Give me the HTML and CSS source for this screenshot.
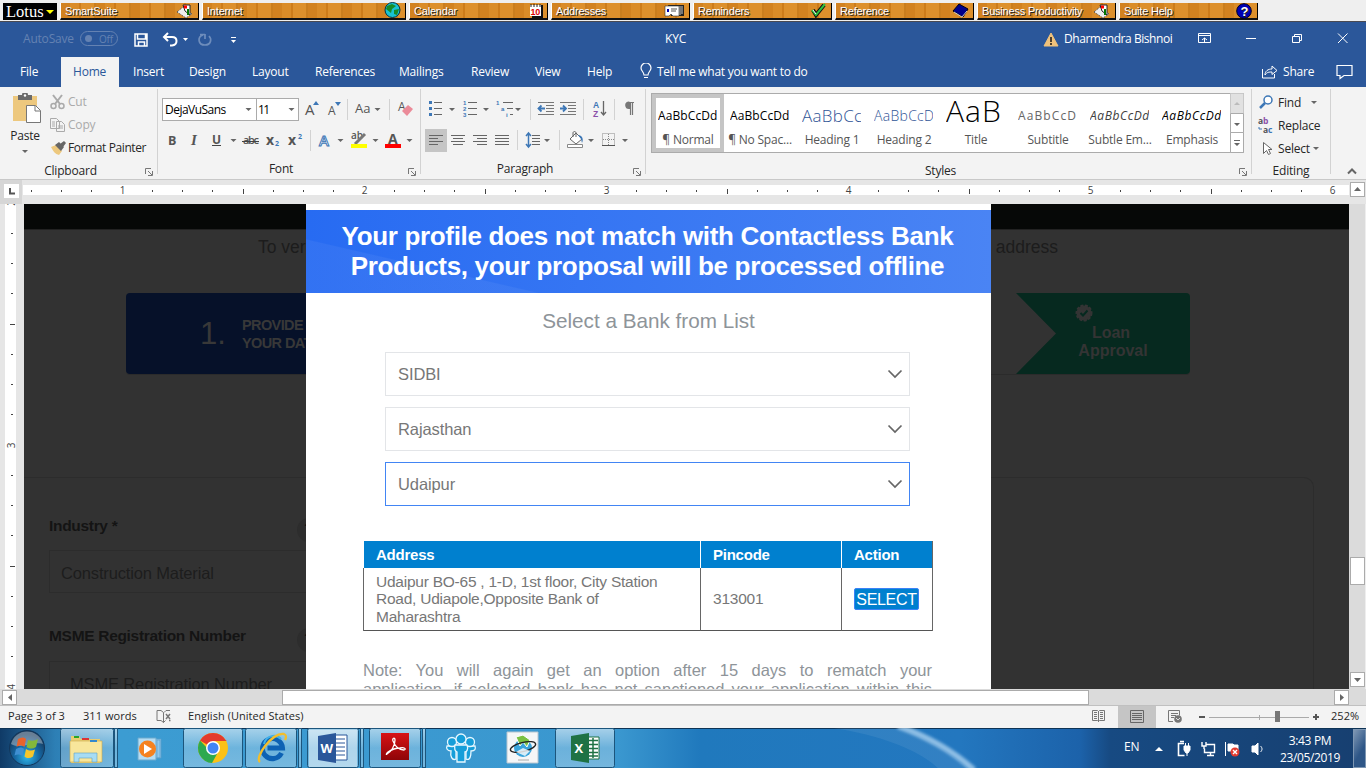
FILE: index.html
```html
<!DOCTYPE html>
<html lang="en">
<head>
<meta charset="utf-8">
<title>KYC</title>
<link rel="stylesheet" href="styles.css">
</head>
<body>
<div class="screen">
<nav class="lotus">
  <div class="lotus-logo">Lotus<i></i></div>
  <div class="wood">SmartSuite<svg width="18" height="16"><path d="M1 9l6-5 9 7-6 4z" fill="#eee" stroke="#444" stroke-dasharray="1 1"/><path d="M7 2h7v10l-5-4z" fill="#fff" stroke="#222"/><path d="M8 4h3" stroke="red" stroke-width="3"/><path d="M12 6v6" stroke="#070" stroke-width="2"/></svg></div>
  <div class="wood wide">Internet<svg width="17" height="17"><circle cx="8.500" cy="8" r="7.500" fill="#19c3d2" stroke="#034" /><path d="M3 4l5-2 4 2-4 3-1 4-5-4zM10 8l5-1-2 6-3-1z" fill="#178c27"/></svg></div>
  <div class="wood">Calendar<svg width="14" height="15"><path d="M3 2h11v13H3z" fill="#111"/><path d="M1 2h11v11H1z" fill="#fff"/><path d="M2 1v3M5 1v3M8 1v3M11 1v3" stroke="#222"/><text x="1.500" y="12" class="cal">10</text></svg></div>
  <div class="wood">Addresses<svg width="21" height="14"><path d="M4 1h16v11H7z" fill="#222"/><path d="M1 2h14v10H9l-2-2-2 2H1z" fill="#fff" stroke="#333" stroke-width=".6"/><path d="M3 5h2v3H3z" fill="#00a"/><path d="M7 5h6M7 7h5" stroke="#555"/><path d="M16 2v9M18 2v8" stroke="#ccc"/></svg></div>
  <div class="wood">Reminders<svg width="16" height="15"><path d="M2 7l3 5L13 2" fill="none" stroke="#111" stroke-width="4"/><path d="M1 7l4 5L14 1" fill="none" stroke="#30c040" stroke-width="2"/><path d="M2 7l3 4" stroke="#fff"/></svg></div>
  <div class="wood">Reference<svg width="17" height="15"><path d="M1 8l6-7 9 5-5 8z" fill="#00008b" stroke="#001"/><path d="M2 9l8 5 5-6" fill="none" stroke="#ccc"/></svg></div>
  <div class="wood">Business Productivity<svg width="18" height="16"><path d="M1 9l6-5 9 7-6 4z" fill="#eee" stroke="#444" stroke-dasharray="1 1"/><path d="M7 2h7v10l-5-4z" fill="#fff" stroke="#222"/><path d="M8 4h3" stroke="red" stroke-width="3"/><path d="M12 6v6" stroke="#070" stroke-width="2"/></svg></div>
  <div class="wood">Suite Help<svg width="17" height="16"><circle cx="8" cy="8" r="7.300" fill="#0000b4" stroke="#002"/><text x="4.500" y="12.500" class="q">?</text></svg></div>
</nav>

<header class="title">
  <span class="autosave">AutoSave</span>
  <span class="toggle"><i></i>Off</span>
  <svg class="quick" width="110" height="35" viewBox="130 22 110 35" fill="none" stroke="#fff">
    <path d="M135 34h12v12h-12zM137.500 34v5h8v-5M138.500 46v-4h6v4" stroke-width="1.500"/>
    <path d="M168 33l-4 4 4 4M164 37h8c6 0 6 8 0 8.500h-2" stroke-width="2"/>
    <path d="M183 38h5l-2.500 3z" fill="#fff" stroke="none"/>
    <path d="M203 35c-6 2-5 10 2 10 6 0 7-6 4-9M205 39v-5M200 34.500h5" stroke="#6e8dbc" stroke-width="1.700"/>
    <path d="M231 37.500h5"/><path d="M231 40h5l-2.500 3z" fill="#fff" stroke="none"/>
  </svg>
  <span class="doc">KYC</span>
  <svg class="warn" width="16" height="15"><path d="M8 1l7 13H1z" fill="#f0c27b" stroke="#f0c27b"/><path d="M8 5v5M8 11v2" stroke="#4d4030" stroke-width="2"/></svg>
  <span class="user">Dharmendra Bishnoi</span>
  <svg class="winctl" width="166" height="35" viewBox="1190 22 166 35" fill="none" stroke="#fff">
    <path d="M1198.500 33.500h12v9h-12zM1198.500 35.500h12M1204.500 42v-4M1202 40l2.500-2 2.500 2"/>
    <path d="M1246 38.500h10M1292.500 36.500h7v6h-7zM1294.500 36.500v-2h7v6h-2M1338 33.500l9.500 9.500M1347.500 33.500l-9.500 9.500"/>
  </svg>
</header>
<nav class="tabs">
  <span class="file">File</span><span class="on">Home</span><span>Insert</span><span>Design</span><span>Layout</span><span>References</span><span>Mailings</span><span>Review</span><span>View</span><span>Help</span>
  <svg width="13" height="18" fill="none" stroke="#fff" stroke-width="1.200"><path d="M4 12c0-3-3-4-3-7a4.800 4.800 0 0 1 10 0c0 3-3 4-3 7zM4 14.500h4"/></svg>
  <span class="tell">Tell me what you want to do</span>
  <svg width="17" height="16" fill="none" stroke="#fff"><path d="M1.500 5v9h12v-4M4 11c0-4 3-6 7-6V2l5 4.500-5 4V8C8 8 6 8 4 11z"/></svg>
  <span>Share</span>
  <svg width="17" height="16" fill="none" stroke="#fff" stroke-width="1.200"><path d="M1 1.500h15v10H8l-4 3v-3H1z"/></svg>
</nav>

<section class="ribbon">
  <div class="group clipboard">
    <div class="body">
      <div class="paste">
        <svg width="30" height="31"><path d="M1 3h24v25H1z" fill="#edc87e"/><path d="M6 2h4a3 3 0 0 1 6 0h4v5H6z" fill="#6a6a6a"/><circle cx="13" cy="2.500" r="1.200" fill="#fff"/><path d="M14.500 12.500h9l5 5v12h-14z" fill="#fff" stroke="#777"/><path d="M23 13v5h5" fill="none" stroke="#777"/></svg>
        <span>Paste</span><i class="caret"></i>
      </div>
      <div class="clips">
        <div class="dim"><svg width="16" height="16" fill="none" stroke="#aaa" stroke-width="1.500"><circle cx="3.500" cy="12" r="2.500"/><circle cx="11.500" cy="12" r="2.500"/><path d="M3 1l7 9M12 1L5 10" stroke-width="2"/></svg>Cut</div>
        <div class="dim"><svg width="16" height="16" fill="#f3f3f3" stroke="#aaa"><path d="M.5 1.500h6l3 3v7h-9zM6.500 4.500h5l3 3v7h-8z"/><path d="M2 5h3M2 7h3M2 9h3M8 9h5M8 11h5" /></svg>Copy</div>
        <div class="fp"><svg width="16" height="16"><path d="M1 7l5-2 6 6-3 4c-4-1-6-4-8-8z" fill="#edc87e"/><path d="M5 5l4-3 5 5-3 4zM10 4l4-3 2 2-3 4z" fill="#666"/></svg>Format Painter</div>
      </div>
    </div>
    <div class="label">Clipboard</div>
    <svg class="launch" width="8" height="8"><path d="M.5 6V.5H6M3 3l4 4M7.500 3v4.500H3" fill="none" stroke="#777"/></svg>
  </div>

  <div class="group font">
    <svg class="art" width="263" height="75" viewBox="158 87 263 75">
      <rect x="162.500" y="98.500" width="94" height="22" fill="#fff" stroke="#ababab"/><rect x="256.500" y="98.500" width="42" height="22" fill="#fff" stroke="#ababab"/>
      <g class="t"><text x="165" y="114" textLength="61">DejaVuSans</text><text x="258" y="114" textLength="12">11</text></g>
      <g fill="#666"><path id="c" d="M245.500 108h6l-3 3z"/><use href="#c" x="43"/><use href="#c" x="129"/><use href="#c" x="-15" y="31"/><use href="#c" x="92" y="31"/><use href="#c" x="127" y="31"/><use href="#c" x="161" y="31"/></g>
      <g class="gt"><text x="305" y="115" font-size="15">A</text><text x="328" y="115" font-size="12">A</text><text x="355" y="113" font-size="13">Aa</text><text x="398" y="111" font-size="12">A</text></g>
      <path d="M313 105l3-4 3 4zM335 102h6l-3 4z" fill="#3d77b6"/>
      <path d="M402 111l6-6 5 4-6 7z" fill="#eb8b99"/>
      <g stroke="#d2d2d2"><path d="M347.500 99v21M389.500 99v21M310.500 130v21"/></g>
      <g class="gt"><text x="168" y="144.500" font-weight="bold" font-size="12.500">B</text><text x="191" y="144.500" font-style="italic" font-weight="bold" font-family="Liberation Serif" font-size="15">I</text><text x="212" y="144" font-weight="bold" font-size="12">U</text><text x="243" y="144" font-size="11" font-weight="600" textLength="16">abc</text><text x="266" y="144.500" font-weight="bold" font-size="14">x</text><text x="288" y="144.500" font-weight="bold" font-size="14">x</text></g>
      <path d="M212 145.500h9M242 141.500h17" stroke="#444"/>
      <g class="tiny"><text x="275" y="146">2</text><text x="298" y="139">2</text></g>
      <text x="319" y="145.500" class="glow">A</text>
      <g class="gt"><text x="351" y="139" font-size="10" font-weight="600">ab</text><text x="388" y="144" font-size="14" font-weight="bold">A</text></g>
      <path d="M365 134l-8 8-2 2" stroke="#777" stroke-width="3"/><path d="M351 144h16v4h-16z" fill="#ff0"/><path d="M385 144h16v4h-16z" fill="red"/>
    </svg>
    <div class="label">Font</div>
    <svg class="launch" width="8" height="8"><path d="M.5 6V.5H6M3 3l4 4M7.500 3v4.500H3" fill="none" stroke="#777"/></svg>
  </div>

  <div class="group para">
    <svg class="art" width="225" height="75" viewBox="421 87 225 75">
      <path d="M425 129h22v23h-22z" fill="#c5c5c5"/>
      <g fill="#3d77b6"><path d="M429 101h3v3h-3zM429 107h3v3h-3zM429 113h3v3h-3z"/></g>
      <path d="M434 102.500h8M434 108.500h8M434 114.500h8M468 102.500h9M468 108.500h9M468 114.500h9M503 102.500h10M507 108.500h6M510 114.500h3" stroke="#666"/>
      <g class="tiny sm"><text x="463" y="105">1</text><text x="463" y="111">2</text><text x="463" y="117">3</text><text x="496" y="105">1</text><text x="501" y="111">a</text><text x="506" y="117">i</text></g>
      <g fill="#666"><path d="M449 108h6l-3 3zM483 108h6l-3 3zM515 108h6l-3 3zM544 139h6l-3 3zM588 139h6l-3 3zM622 139h6l-3 3z"/></g>
      <path d="M530.500 99v21M583.500 99v21M614.500 99v21M517.500 130v20M559.500 130v20" stroke="#d2d2d2"/>
      <path d="M538 102.500h16M546 105.500h8M546 108.500h8M546 111.500h8M538 114.500h16M560 102.500h16M568 105.500h8M568 108.500h8M568 111.500h8M560 114.500h16" stroke="#777"/>
      <path d="M545 108.500h-6M541.500 105.500l-3 3 3 3M560 108.500h6M563 105.500l3 3-3 3" stroke="#3d77b6" stroke-width="1.800" fill="none"/>
      <text x="593" y="108" class="az">A</text><text x="593" y="117" class="az zz">Z</text><path d="M603.500 101v14M601 112l2.500 3 2.500-3" stroke="#666" fill="none" stroke-width="1.300"/>
      <path d="M634 102.500h-5a2.500 2.500 0 0 0 0 6h1M630.500 103v12M632.500 103v12" stroke="#777" fill="none" stroke-width="1.200"/><path d="M625.500 105.500a3 3 0 0 1 5-3v6c-3 0-5-1-5-3z" fill="#777"/>
      <path d="M429 135.500h14M429 138.500h9M429 141.500h14M429 144.500h9M451 135.500h14M453 138.500h10M451 141.500h14M453 144.500h10M473 135.500h14M477 138.500h10M473 141.500h14M477 144.500h10M495 135.500h14M495 138.500h14M495 141.500h14M495 144.500h14M532 135.500h8M532 138.500h8M532 141.500h8M532 144.500h8" stroke="#666"/>
      <path d="M528.500 133v14M526 136l2.500-3 2.500 3M526 144l2.500 3 2.500-3" stroke="#3d77b6" fill="none" stroke-width="1.500"/>
      <path d="M570 139l6-6 6 6-6 5z" fill="#fff" stroke="#666"/><path d="M573 137v-4c0-2 3-2 3 0v4" fill="none" stroke="#666"/><path d="M578 135c4 0 6 4 4 8l-1-4z" fill="#3d77b6"/><path d="M567.500 144.500h15v3h-15z" fill="#fff" stroke="#888"/>
      <path d="M602.500 133.500h12v12h-12zM608.500 134v12M603 139.500h12" fill="none" stroke="#888" stroke-dasharray="1 1"/><path d="M602 145.500h13" stroke="#555"/>
    </svg>
    <div class="label">Paragraph</div>
    <svg class="launch" width="8" height="8"><path d="M.5 6V.5H6M3 3l4 4M7.500 3v4.500H3" fill="none" stroke="#777"/></svg>
  </div>

  <div class="group styles">
    <div class="gallery">
      <div class="st sel"><b>AaBbCcDd</b><span>¶ Normal</span></div>
      <div class="st"><b>AaBbCcDd</b><span>¶ No Spac...</span></div>
      <div class="st h1"><b>AaBbCc</b><span>Heading 1</span></div>
      <div class="st h2"><b>AaBbCcD</b><span>Heading 2</span></div>
      <div class="st tt"><b>AaB</b><span>Title</span></div>
      <div class="st sub"><b>AaBbCcD</b><span>Subtitle</span></div>
      <div class="st sem"><b>AaBbCcDd</b><span>Subtle Em...</span></div>
      <div class="st em"><b>AaBbCcDd</b><span>Emphasis</span></div>
      <svg class="gal" width="14" height="60"><path d="M.5.500h13v20H.5z" fill="#e1e1e1" stroke="#c8c8c8"/><path d="M.5 20.500h13v19H.5zM.5 39.500h13v20H.5z" fill="#fff" stroke="#ababab"/><path d="M4 12h6l-3-3z" fill="#bbb"/><path d="M4 30h6l-3 3zM4 50h6l-3 3zM4 47h6v1H4z" fill="#666"/></svg>
    </div>
    <div class="label">Styles</div>
    <svg class="launch" width="8" height="8"><path d="M.5 6V.5H6M3 3l4 4M7.500 3v4.500H3" fill="none" stroke="#777"/></svg>
  </div>

  <div class="group editing">
    <div class="finds">
      <div><svg width="19" height="16"><circle cx="10" cy="5" r="4" fill="#fff" stroke="#3d77b6" stroke-width="1.500"/><path d="M7 8l-5 5" stroke="#3d77b6" stroke-width="2.500"/></svg>Find<i class="caret far"></i></div>
      <div><svg width="19" height="16" class="rep"><text x="0" y="6">a<tspan fill="#8a4fa8">b</tspan></text><text x="5" y="15">a<tspan fill="#3d77b6">c</tspan></text><path d="M1 9v2h3" fill="none" stroke="#3d77b6"/></svg>Replace</div>
      <div><svg width="19" height="16"><path d="M5.500 1.500v11l3-3 2 4 2-1-2-4h3.500z" fill="#fff" stroke="#666"/></svg>Select<i class="caret"></i></div>
    </div>
    <div class="label">Editing</div>
  </div>
  <svg class="collapse" width="10" height="7"><path d="M1 5.500l4-4 4 4" fill="none" stroke="#666" stroke-width="2"/></svg>
</section>

<div class="hruler">
  <svg width="1349" height="24" viewBox="0 180 1349 24">
    <defs><pattern id="h" x="1" y="180" width="242" height="24" patternUnits="userSpaceOnUse"><path d="M30 10h1v2h-1zM60 10h1v2h-1zM90 10h1v2h-1zM151 10h1v2h-1zM181 10h1v2h-1zM211 10h1v2h-1zM0 9h1v5H0z" fill="#444"/></pattern></defs>
    <path d="M0 180h22v24H0z" fill="#d6d6d6"/><path d="M4 184h15v14H4z" fill="#fff"/><path d="M10 188v5.500h5" fill="none" stroke="#555" stroke-width="2"/>
    <path d="M23 185h1326v10H23z" fill="#fff"/><path d="M24 185h1308v10H24z" fill="url(#h)"/>
    <g class="num"><text x="122.500" y="194">1</text><text x="364.500" y="194">2</text><text x="606.500" y="194">3</text><text x="848.500" y="194">4</text><text x="1090.500" y="194">5</text><text x="1332.500" y="194">6</text></g>
  </svg>
  <div class="sbtn"><svg width="13" height="13"><path d="M3 8h7L6.500 4z" fill="#666"/></svg></div>
</div>

<main class="work">
  <svg class="vruler" width="24" height="485" viewBox="0 204 24 485">
    <defs><pattern id="v" x="0" y="203" width="24" height="242" patternUnits="userSpaceOnUse"><path d="M11 30h2v1h-2zM11 60h2v1h-2zM11 90h2v1h-2zM10 121h5v1h-5zM11 151h2v1h-2zM11 181h2v1h-2zM11 211h2v1h-2z" fill="#444"/></pattern></defs>
    <path d="M5 204h11v485H5z" fill="#fff"/><path d="M5 204h11v485H5z" fill="url(#v)"/>
    <g class="num"><text transform="translate(15 203) rotate(-90)">2</text><text transform="translate(15 445.500) rotate(-90)">3</text><text transform="translate(15 687) rotate(-90)">4</text></g>
  </svg>
  <div class="page">
    <div class="band"></div>
    <div class="verify"><span>To verify</span><span>address</span></div>
    <div class="steps">
      <div class="one"><span class="n">1.</span><span>PROVIDE<br>YOUR DATA</span></div>
      <div class="loan">
        <svg width="18" height="18"><circle cx="9" cy="9" r="7.500" fill="#343434" stroke="#343434" stroke-width="2" stroke-dasharray="3 1.500"/><path d="M5.500 9l2.500 2.500 4.500-5" fill="none" stroke="#06291f" stroke-width="2"/></svg>
        <span class="word">Loan</span><span>Approval</span>
      </div>
    </div>
    <div class="form">
      <div class="lab">Industry *<i>?</i></div>
      <div class="field">Construction Material</div>
      <div class="lab">MSME Registration Number<i>?</i></div>
      <div class="field in">MSME Registration Number</div>
    </div>
    <section class="modal">
      <h1><span>Your profile does not match with Contactless Bank</span><span>Products, your proposal will be processed offline</span></h1>
      <h2>Select a Bank from List</h2>
      <div class="sel-box">SIDBI<svg width="16" height="10"><path d="M1.500 1.500L8 8l6.500-6.500"/></svg></div>
      <div class="sel-box">Rajasthan<svg width="16" height="10"><path d="M1.500 1.500L8 8l6.500-6.500"/></svg></div>
      <div class="sel-box active">Udaipur<svg width="16" height="10"><path d="M1.500 1.500L8 8l6.500-6.500"/></svg></div>
      <div class="table">
        <b>Address</b><b>Pincode</b><b>Action</b>
        <div>Udaipur BO-65 , 1-D, 1st floor, City Station<br>Road, Udiapole,Opposite Bank of<br>Maharashtra</div><div>313001</div><div><span class="pick">SELECT</span></div>
      </div>
      <p><span>Note: You will again get an option after 15 days to rematch your</span><span>application, if selected bank has not sanctioned your application within this</span></p>
    </section>
  </div>
  <div class="vscroll"><i></i><div class="sbtn"><svg width="13" height="13"><path d="M3 5h7L6.500 9z" fill="#666"/></svg></div></div>
</main>

<div class="hscroll"><div class="sbtn"><svg width="13" height="13"><path d="M9 3v7L5 6.500z" fill="#666"/></svg></div><i></i><div class="sbtn"><svg width="13" height="13"><path d="M5 3v7l4-3.500z" fill="#666"/></svg></div></div>

<footer class="status">
  <span>Page 3 of 3</span><span>311 words</span>
  <svg width="16" height="14" fill="none" stroke="#777"><path d="M7.500 2.500L5 .500H1v10h4l2.500 2 2-2M7.500 2.500v10M8 2.500l2-2h4"/><path d="M10 4l4 5M14 4l-4 5M13 10.500h1.500" stroke-width="1.500"/></svg>
  <span>English (United States)</span>
  <svg class="views" width="242" height="22" viewBox="1086 706 242 22" fill="none">
    <path d="M1118 706h38v22h-38z" fill="#c5c5c5"/>
    <path d="M1092.500 710.500h5l1 1 1-1h5v10h-5l-1 1-1-1h-5zM1098.500 711v11M1094 712.500h3M1094 714.500h3M1094 716.500h3M1094 718.500h3M1100 712.500h3M1100 714.500h3M1100 716.500h3M1100 718.500h3" stroke="#777"/>
    <path d="M1130.500 710.500h13v12h-13zM1132 713.500h10M1132 715.500h10M1132 717.500h10M1132 719.500h10" stroke="#666"/>
    <path d="M1173 721.500h-4.500v-11h11v5M1171 713.500h7M1171 715.500h5M1171 717.500h3" stroke="#777"/><circle cx="1178" cy="719" r="3.800" fill="#777"/><path d="M1176 718l2 2 2-2" stroke="#ddd"/>
    <path d="M1199 717h6M1313 717h6M1316 714v6" stroke="#555" stroke-width="2"/><path d="M1209 717.500h100M1259.500 715v5" stroke="#aaa"/><path d="M1275 711h5v11h-5z" fill="#777"/>
  </svg>
  <span>252%</span>
</footer>

<footer class="taskbar">
  <svg class="tasks" width="1100" height="40" viewBox="0 728 1100 40">
    <defs>
      <radialGradient id="orb" cx=".5" cy=".75" r=".65"><stop offset="0" stop-color="#2fb9ec"/><stop offset=".55" stop-color="#1565a0"/><stop offset="1" stop-color="#173a5c"/></radialGradient>
      <linearGradient id="btn" x2="0" y2="1"><stop stop-color="#fff" stop-opacity=".55"/><stop offset=".5" stop-color="#fff" stop-opacity=".25"/><stop offset="1" stop-color="#fff" stop-opacity=".3"/></linearGradient>
      <linearGradient id="red" x2="0" y2="1"><stop stop-color="#d81214"/><stop offset="1" stop-color="#8e0508"/></linearGradient>
      <filter id="soft"><feGaussianBlur stdDeviation="1.500"/></filter>
    </defs>
    <path d="M820 726c60 8 100 24 120 44h30c-22-20-48-34-76-44z" fill="#fff" opacity=".07"/>
    <path d="M898 726c28 10 54 24 76 44" fill="none" stroke="#a9d0ef" stroke-width="6" opacity=".8" filter="url(#soft)"/>
    <circle cx="27" cy="748" r="17.500" fill="url(#orb)" stroke="#12365a"/><path d="M11 744a16.500 16.500 0 0 1 32 0c-8-3-22 6-32 0z" fill="#fff" opacity=".35"/>
    <path d="M18 739c3-2 6-2 8 0l-1.500 8c-3-2-5-2-8 0z" fill="#e8632c"/><path d="M28 740c3 1 7 1 10-1l-2 8c-3 2-6 2-9.500 0z" fill="#83b83b"/><path d="M16 749c3-2 6-2 8 0l-1.500 7c-3-2-5-2-8-.500z" fill="#3f8fd2"/><path d="M26 749c3 2 6 2 9 .500l-2 7c-3 2-6 2-8.500 0z" fill="#f6c62c"/>
    <g fill="url(#btn)" stroke="#1c557c"><rect x="114.500" y="728.500" width="3" height="39"/><rect x="60.500" y="728.500" width="53" height="39" rx="2"/><rect x="183.500" y="728.500" width="59" height="39" rx="2"/><rect x="245.500" y="728.500" width="51" height="39" rx="2"/><rect x="298.500" y="728.500" width="3" height="39"/><rect x="307.500" y="728.500" width="51" height="39" rx="2"/><rect x="360.500" y="728.500" width="3" height="39"/><rect x="369.500" y="728.500" width="51" height="39" rx="2"/><rect x="422.500" y="728.500" width="3" height="39"/><rect x="555.500" y="728.500" width="59" height="39" rx="2"/></g>
    <rect x="309" y="730" width="48" height="37" fill="#fff" opacity=".45"/>
    <g><path d="M71 736h8l2 3h19v24H71z" fill="#e9ce72"/><path d="M70 741h32v21H70z" fill="#f8e69b" stroke="#caa94a" stroke-width=".6"/><path d="M74 736h5v2h-5z" fill="#2aa52a"/><path d="M82 738h7v2h-7z" fill="#d33"/><path d="M90 740h7v2h-7z" fill="#38c"/><path d="M74 753h23v9h-5v-4H79v4h-5z" fill="#a7dcf4" stroke="#5fa3c4" stroke-width=".6"/></g>
    <g><path d="M146 739h15v19h-15zM157 740h3v18h-3z" fill="#8ec8ee" stroke="#5c9fc8" stroke-width=".7"/><path d="M138 738h18v22h-18z" fill="#b5dcf3" stroke="#6ba9cd"/><circle cx="147.500" cy="749" r="8.500" fill="#f58220"/><path d="M144 744l8 5-8 5z" fill="#fff"/></g>
    <g><circle cx="213" cy="748" r="15" fill="#fbc116"/><path d="M213 748L200 740.500A15 15 0 0 1 226 740.500L227 741H213z" fill="#e33b2e"/><path d="M213 748h-6l-7-7.500A15 15 0 0 0 212 763l5-9z" fill="#2da94f"/><circle cx="213" cy="748" r="7" fill="#fff"/><circle cx="213" cy="748" r="5.500" fill="#4285f4"/></g>
    <g fill="none"><path d="M281.500 753a10 10 0 1 1 1-5h-15" stroke="#0d62b4" stroke-width="5"/><path d="M281 739a10 10 0 0 0-17 5" stroke="#3fb1ea" stroke-width="2"/><path d="M260 762c-6-4 12-30 24-28 3 1 2 4 1 6" stroke="#f2be2c" stroke-width="2.300"/></g>
    <g><path d="M333 735h14v25h-14z" fill="#fff" stroke="#2b579a"/><path d="M335 739h10M335 743h10M335 747h10M335 751h10M335 755h10" stroke="#2b579a"/><path d="M318 736l18-3v30l-18-3z" fill="#2b579a"/><text x="320.500" y="753" class="logo">W</text></g>
    <g><path d="M381 733h28v27h-28z" fill="url(#red)"/><path d="M387 754c4-2 8-8 8-14 0-3-3-2-2 1 2 5 6 9 11 9 3-1 0-3-4-2-4 0-9 2-12 4-2 2-2 3-1 2z" fill="none" stroke="#fff" stroke-width="1.300"/></g>
    <g fill="#169ed9" stroke="#e7f7ff" stroke-width="1.300"><path d="M447 746h9v13c-4 2-6-3-5-8-4 0-5-3-4-5zM466 746h9c1 3 0 5-4 5 0 5-1 10-5 8z"/><circle cx="452" cy="742" r="4.500"/><circle cx="470" cy="742" r="4.500"/><path d="M455 745h12c2 5-1 7-2 7v10h-8v-10c-2-1-3-3-2-7z"/><circle cx="461" cy="739" r="5"/></g>
    <g><path d="M507 732h31v31h-31z" fill="#f5f6f7" stroke="#b8c6d0"/><circle cx="523" cy="748" r="9" fill="#39a4db"/><path d="M516 737l7-2 7 5-3 7-4-5-3 4z" fill="#7ac142" stroke="#fff"/><ellipse cx="523" cy="747" rx="13" ry="4.500" fill="none" stroke="#222" stroke-width="1.300" transform="rotate(-14 523 747)"/><path d="M516 752l7-4 7 3-5 5z" fill="#fff" opacity=".8"/><path d="M518 760h11" stroke="#aaa"/></g>
    <g><path d="M586 737h13v22h-13z" fill="#fff" stroke="#1f7244"/><path d="M588 740.500h10M588 744.500h10M588 748.500h10M588 752.500h10M588 756h10M593 738v20" stroke="#1f7244" stroke-width="1.500"/><path d="M571 736l18-3v30l-18-3z" fill="#1f7244"/><text x="574.500" y="753" class="logo">X</text></g>
  </svg>
  <span class="lang">EN</span>
  <svg class="tray" width="124" height="40" viewBox="1148 728 124 40" fill="none" stroke="#fff">
    <path d="M1155 751h8l-4-4z" fill="#fff" stroke="none"/>
    <path d="M1184 743.500h-5.500v12h6M1180 741.500h4" stroke-width="1.600"/><path d="M1184 746h6v4l-2 3h-2l-2-3zM1187 752v4" fill="#fff"/><path d="M1185.500 743v3M1188.500 743v3"/>
    <path d="M1206.500 744.500h8v8h-10v-4M1207 755.500h7M1210.500 753v2M1202 742v4h4v-4M1204 746v3" stroke-width="1.400"/>
    <path d="M1225.500 742v14M1228 744h5l1 1h4v6h-10z" fill="#fff"/><circle cx="1235" cy="752" r="4.500" fill="#e23b30" stroke="none"/><path d="M1233 750l4 4M1237 750l-4 4" stroke-width="1.400"/>
    <path d="M1252 746h3l3-3v12l-3-3h-3z" fill="#fff"/><path d="M1260.500 746c2 2 2 4 0 6"/>
  </svg>
  <div class="clock"><span>3:43 PM</span><span>23/05/2019</span></div>
  <div class="peek"></div>
</footer>
</div>
</body>
</html>
```
FILE: styles.css
```css
*{box-sizing:border-box}
body{margin:0;overflow:hidden;font:12px/16px "Open Sans","Noto Sans",sans-serif;color:#262626;letter-spacing:-.2px}
i{font-style:normal}
svg{display:block;flex:none}
.screen{width:1366px;height:768px;display:grid;grid-template-rows:22px 35px 30px 93px 24px 485px 17px 22px 40px;white-space:nowrap;overflow:hidden}

.lotus{display:flex;gap:3px;padding:3px;background:#efefef;border-bottom:1px solid #4a4a52}
.lotus-logo{width:54px;height:17px;background:#000;color:#fff;font:16.500px/16px "Liberation Serif",serif;letter-spacing:0;padding-left:3px;display:flex;align-items:center;gap:2px}
.lotus-logo i{border:4px solid transparent;border-top-color:#ff0;border-bottom:0}
.wood{width:139px;height:17px;display:flex;justify-content:space-between;align-items:center;padding:0 4px;color:#fff;font:11px/14px "Liberation Sans",sans-serif;letter-spacing:-.2px;text-shadow:1px 1px #222;border-right:1px solid #000;border-bottom:2px solid #111;border-left:1px solid #fff;background:repeating-linear-gradient(90deg,#d28220 0 9px,#da8c28 9px 18px,#cd7c1a 18px 20px,#dd902c 20px 33px,#ca7e1e 33px 35px)}
.wide{width:204px}
.cal{font:bold 9px "Liberation Sans";fill:#d00;text-shadow:none}
.q{font:bold 13px "Liberation Sans";fill:#fff}

.title{background:#2b579a;color:#fff;display:grid;grid-template-columns:57px 50px 535px 378px 21px 126px 166px;padding-left:23px;align-items:center}
.title>span{margin-top:-2px}
.quick,.winctl{margin-top:-1px}
.autosave,.toggle{color:#6482b2;font-size:12px}
.user{letter-spacing:-.45px}
.toggle{width:38px;height:15px;border:1px solid #6482b2;border-radius:8px;font-size:10px;line-height:12px;display:flex;gap:7px;align-items:center;padding-left:4px}
.toggle i{width:7px;height:7px;border-radius:50%;background:#6482b2}
.tabs{background:#2b579a;color:#fff;display:grid;grid-template-columns:41px 72px 56px 63px 63px 84px 72px 64px 52px 53px 17px 604px 22px 53px 20px;padding-left:20px;align-items:center;line-height:30px;font-size:12px}
.tabs .on{background:#f3f3f3;color:#2b579a;width:58px;padding-left:12px;height:30px}
.tell{letter-spacing:-.27px}

.ribbon{background:#f3f3f3;border-bottom:1px solid #c8c8c8;display:grid;grid-template-columns:158px 263px 225px 606px 79px 30px;position:relative}
.group{height:85px;margin-top:2px;border-right:1px solid #d2d2d2;position:relative;display:flex;flex-direction:column}
.label{margin-top:auto;text-align:center;padding-right:16px;height:13px;line-height:12px;margin-bottom:-4px;flex:none}
.font .label,.para .label{margin-top:-1px}
.launch{position:absolute;right:4px;bottom:-2px}
.art{margin-top:-2px}
.body{display:flex;padding-top:4px;height:68px}
.paste{width:50px;display:flex;flex-direction:column;align-items:center}
.paste svg{margin-left:4px}
.paste span{line-height:18px;margin-top:3px}
.caret{display:block;border:3px solid transparent;border-top-color:#666;border-bottom:0}
.paste .caret{margin-top:5px}
.clips div{height:23px;display:flex;gap:2px;align-items:center}
.clips .fp{letter-spacing:-.4px}
.clips{margin-top:-3px}
.dim{color:#aaa}
.gt{fill:#555;font-family:"Open Sans";letter-spacing:0}
.font .art,.para .art{height:75px}
.font .label,.para .label{position:relative;top:2px}
.tiny{font:bold 7px "Open Sans";fill:#3d77b6;letter-spacing:0}
.sm{font:bold 6px "Liberation Sans"}
.glow{font:600 15px "Open Sans";fill:#fff;stroke:#3d77b6;stroke-width:1}
.az{font:bold 8.500px "Liberation Sans";fill:#3d77b6}
.zz{fill:#8a4fa8}
.gallery{display:flex;width:593px;height:60px;margin:4px 0 0 5px;border:1px solid #ababab;border-right:0;background:#fff;position:relative}
.st{width:72px;padding:0 6px;text-align:center}
.st b{display:block;width:59px;height:38px;line-height:43px;overflow:hidden;text-align:left;font-weight:400;color:#000;font-size:12px;letter-spacing:.1px}
.st span{display:block;line-height:16px;color:#555;margin:0 -4px}
.sel{box-shadow:inset 0 0 0 4px #c5c5c5}
.h1 b{font-size:17px;color:#2f5496;font-weight:300;letter-spacing:.3px}
.h2 b{font-size:14px;color:#2f5496;font-weight:300;letter-spacing:.3px}
.tt b{font-size:30px;line-height:34px;font-weight:300;letter-spacing:1px}
.sub b{letter-spacing:1.100px;color:#666}
.sem b{font-style:italic;color:#404040;letter-spacing:.6px}
.em b{font-style:italic;letter-spacing:.6px}
.gal{position:absolute;right:0;top:-1px}
.finds{padding:2px 0 0 6px}
.finds div{height:23px;display:flex;align-items:center;gap:1px}
.finds .caret{margin-left:2px}
.finds .far{margin-left:9px}
.editing .label{padding:0}
.rep{font:bold 8.500px "Open Sans";fill:#555;overflow:visible}
.collapse{position:absolute;left:1347px;top:81px}

.hruler{background:#e6e6e6;display:flex}
.num{font:10px "Open Sans";fill:#444;text-anchor:middle}
.sbtn{width:15px;height:15px;background:#fff;border:1px solid #ababab}
.hruler .sbtn{margin:2px 0 0 1px}
.work{display:grid;grid-template-columns:24px 1325px 17px;min-height:0;background:#e6e6e6}
.vscroll{background:#dbdbdb;padding:353px 1px 0;display:flex;flex-direction:column;border-right:1px solid #eee}
.vscroll i{width:15px;height:28px;background:#fff;border:1px solid #ababab}
.vscroll .sbtn{margin-top:87px}
.page{position:relative;height:485px;overflow:hidden;background:#323232;font-family:"Liberation Sans",sans-serif;letter-spacing:0}
.band{height:26px;background:#060807;border-bottom:1px solid #222}
.verify{display:flex;justify-content:space-between;margin:6px 291px 0 234px;font-size:17.500px;line-height:22px;color:#1c1c1c}
.steps{margin:35px 159px 0 102px;width:1064px;height:82px;display:flex;justify-content:space-between;border-bottom:1px solid #2b2b2b;border-radius:4px}
.one{width:300px;background:#061129;display:flex;align-items:center;padding-left:74px;color:#383838;font-weight:700;font-size:14.500px;line-height:18px;letter-spacing:-.6px;border-radius:4px}
.n{font-weight:400;font-size:31px;width:42px;letter-spacing:0}
.loan{width:174px;background:#06291f;clip-path:polygon(0 0,100% 0,100% 100%,0 100%,40px 50%);border-radius:0 4px 4px 0;color:#343434;font-weight:700;font-size:16px;line-height:18.500px;display:flex;flex-direction:column;align-items:center;padding:11px 0 0 20px}
.loan svg{margin-right:59px}
.word{margin:2px 4px -1px 0}
.form{margin:102px 35px 0 0;border:1px solid #2c2c2c;border-left:0;border-radius:0 10px 0 0;padding:38px 0 0 25px;height:300px}
.lab{width:262px;height:21px;display:flex;justify-content:space-between;font-weight:700;font-size:15.500px;line-height:20px;letter-spacing:-.31px;color:#141414}
.lab i{width:24px;height:24px;border-radius:50%;background:#2d2d2d;margin:2px -10px 0 0;padding-left:7px}
.field{width:500px;height:43px;margin:13px 0 33px;border:1px solid #2c2c2c;padding-left:11px;font-size:16.500px;letter-spacing:-.15px;line-height:44px;color:#1d1d1d}
.in{margin-top:14px;padding-left:20px}
.modal{position:absolute;left:282px;top:0;width:685px;height:500px;background:#fff;padding-top:6px;color:#777}
.modal h1{margin:0;height:83px;padding:11px 2px 0 0;color:#fff;font-size:26px;line-height:30px;letter-spacing:-.33px;background:linear-gradient(13deg,#ffffff0d 22%,transparent 22.500%),linear-gradient(90deg,#276bf2,#4a84f4);text-align:center}
.modal h1 span{display:block}
.modal h2{margin:16px 0 19px;text-align:center;font-weight:400;font-size:20.700px;line-height:24px;color:#8e9499}
.sel-box{width:525px;height:44px;margin:0 0 11px 79px;border:1px solid #e3e5e8;padding:0 6px 0 12px;display:flex;align-items:center;justify-content:space-between;font-size:16.500px;letter-spacing:-.1px}
.sel-box svg{fill:none;stroke:#666;stroke-width:1.700}
.active{border-color:#4285f4}
.table{margin:35px 0 0 57px;width:570px;display:grid;grid-template-columns:336px 141px 91px;grid-template-rows:27px 63px;border-right:1px solid #666;border-left:1px solid #666;letter-spacing:-.24px}
.table b{background:#0080cf;color:#fff;font-size:15px;line-height:27px;padding-left:12px;border-left:1px solid #fff}
.table b:first-child{margin-left:-1px}
.table div{border-bottom:1px solid #555;padding-left:12px;font-size:15.500px;line-height:17.300px;display:flex;align-items:center}
.table div+div{border-left:1px solid #666}
.pick{background:#0080cf;color:#fff;border:1px solid #3b82f6;border-radius:2px;width:65px;height:22px;line-height:21px;text-align:center;font-size:16px;letter-spacing:-.3px}
.modal p{margin:30px 0 0 57px;width:569px;font-size:16.500px;line-height:18.500px;color:#8e9499}
.modal p span{display:block;text-align-last:justify;white-space:normal}

.hscroll{display:flex;padding:1px 17px 1px 2px;background:#dbdbdb;border-bottom:1px solid #c0c0c0}
.hscroll i{width:807px;height:15px;background:#fff;border:1px solid #ababab;margin:0 245px 0 265px}
.status{background:#f3f3f3;display:grid;grid-template-columns:75px 73px 32px 898px 245px 40px;padding-left:8px;align-items:center;font-size:11px;letter-spacing:.05px}
.status>span{margin-top:-2px}
.taskbar{display:grid;grid-template-columns:1124px 24px 122px 80px 16px;border-top:1px solid #0e3355;background:linear-gradient(90deg,#0f3a66 0,#2d7fb5 55px,#3c9cd2 120px,#3a97cf 620px,#2079bd 700px,#2377bf 960px,#1c62aa 1080px,#174a82 1110px,#173f70 1366px);color:#fff}
.tasks,.tray{margin-top:-1px}
.logo{font:bold 13px "Open Sans";fill:#fff}
.lang{line-height:35px}
.clock{display:flex;flex-direction:column;padding-top:3px;line-height:17px;text-align:center;letter-spacing:-.35px}
.peek{margin:0 0 0 3px;border:1px solid #7d96b2;background:linear-gradient(120deg,#7f97b4,#2e5687 60%)}
```
